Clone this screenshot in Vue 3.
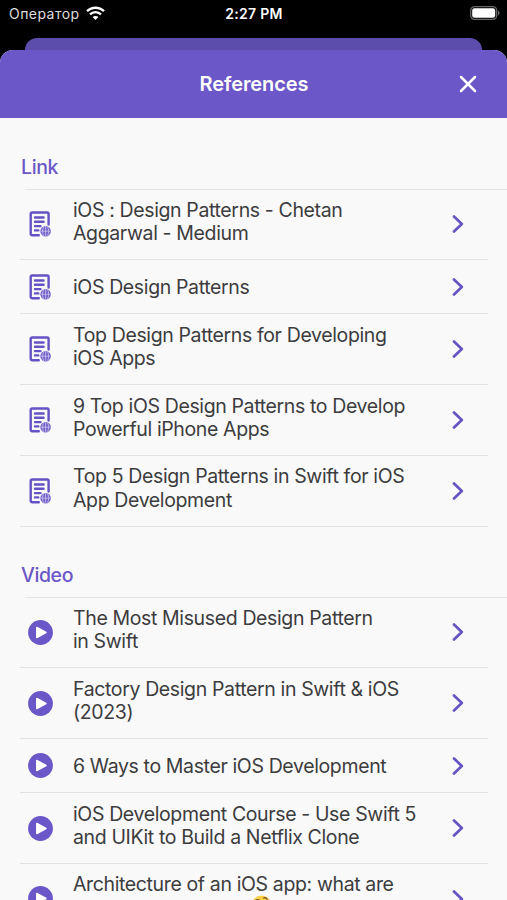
<script setup>
const sections = [
  {
    title: 'Link',
    kind: 'link',
    items: [
      ['iOS : Design Patterns - Chetan', 'Aggarwal - Medium'],
      ['iOS Design Patterns'],
      ['Top Design Patterns for Developing', 'iOS Apps'],
      ['9 Top iOS Design Patterns to Develop', 'Powerful iPhone Apps'],
      ['Top 5 Design Patterns in Swift for iOS', 'App Development'],
    ],
  },
  {
    title: 'Video',
    kind: 'video',
    items: [
      ['The Most Misused Design Pattern', 'in Swift'],
      ['Factory Design Pattern in Swift & iOS', '(2023)'],
      ['6 Ways to Master iOS Development'],
      ['iOS Development Course - Use Swift 5', 'and UIKit to Build a Netflix Clone'],
      ['Architecture of an iOS app: what are', 'design patterns for?'],
    ],
  },
]
</script>

<template>
  <div class="screen">
    <div class="status">
      <div class="carrier">
        <span>Оператор</span>
        <svg class="wifi" width="19" height="15" viewBox="0 0 19 15">
          <path d="M1 5.200C5.800.5 13.200.5 18 5.200" />
          <path d="M4 8.300c3.100-2.900 7.900-2.900 11 0" />
          <path class="dot" d="M9.500 14l-2.900-3c1.600-1.500 4.200-1.500 5.800 0z" />
        </svg>
      </div>
      <div class="time">2:27 PM</div>
      <svg class="battery" width="30" height="14" viewBox="0 0 30 14">
        <rect class="shell" x=".7" y=".7" width="26" height="12.600" rx="3.700" />
        <rect class="charge" x="2.200" y="2.200" width="23" height="9.600" rx="2.200" />
        <path class="tip" d="M28 4.600c2 .8 2 4 0 4.800z" />
      </svg>
    </div>
    <div class="behind"></div>
    <div class="sheet">
      <header class="head">
        <h1>References</h1>
        <svg class="close" width="18" height="18" viewBox="0 0 18 18">
          <path d="M2 2l14 14M16 2L2 16" />
        </svg>
      </header>
      <section v-for="s in sections" :key="s.title" class="section">
        <h2>{{ s.title }}</h2>
        <div class="rule"></div>
        <div v-for="(lines, i) in s.items" :key="i" class="row" :class="{ single: lines.length === 1 }">
          <div class="icon">
            <svg v-if="s.kind === 'link'" width="22" height="26" viewBox="0 0 22 26">
              <path class="page" d="M9.800 24.300H3.200a1.500 1.500 0 0 1-1.500-1.500V2.900c0-.8.6-1.400 1.500-1.400h15c.8 0 1.400.6 1.400 1.400v10.600" />
              <path class="page" d="M6 6.500h8.600M6 10.800h8.600M6 15.100h5.500M6 19.400h3.300" />
              <circle class="globe" cx="16.600" cy="20.200" r="5.300" />
              <path class="grid" d="M11.600 20.200h10M16.600 15.200v10M14.600 15.600c-1.400 3-1.400 6.200 0 9.200M18.600 15.600c1.400 3 1.400 6.200 0 9.200" />
            </svg>
            <svg v-else width="25" height="25" viewBox="0 0 25 25">
              <circle class="disc" cx="12.500" cy="12.500" r="12.400" />
              <path class="play" d="M8.800 7.500v10L18 12.500z" />
            </svg>
          </div>
          <div class="text">
            <div v-for="(l, n) in lines" :key="n">{{ l }}<svg v-if="l.endsWith('for?')" class="emoji" width="21" height="21" viewBox="0 0 21 21">
              <circle cx="10.500" cy="10.500" r="10" fill="#f8cf45" />
              <path d="M4.500 5.500q2-1.500 4-.5M12 3q3-1 4.500 1.500" fill="none" stroke="#7b551d" stroke-width="1.300" />
              <circle cx="7" cy="9" r="1.300" fill="#573b17" />
              <circle cx="13.500" cy="9" r="1.300" fill="#573b17" />
              <path d="M8 14.500q3-1.500 5.500-.5" fill="none" stroke="#7b551d" stroke-width="1.300" />
            </svg></div>
          </div>
          <svg class="chevron" width="12" height="18" viewBox="0 0 12 18">
            <path d="M2 1.500l7.800 7.500L2 16.500" />
          </svg>
        </div>
      </section>
    </div>
  </div>
</template>

<style>
body { background: #000; }
</style>

<style scoped>
.screen { width: 507px; height: 900px; overflow: hidden; background: #000; display: flex; flex-direction: column; font-family: Inter, "Noto Sans", sans-serif; }
.status { height: 38px; flex: none; display: grid; grid-template-columns: 1fr 80px 1fr; padding: 6px 7px 0 9px; box-sizing: border-box; color: #fff; font-size: 14px; line-height: 16px; }
.carrier { display: flex; gap: 6px; color: #ddd; letter-spacing: .45px; }
.wifi { fill: none; stroke: #fff; stroke-width: 2.400; }
.dot { fill: #fff; stroke: none; }
.time { text-align: center; font-weight: 600; letter-spacing: .3px; margin-left: -1px; white-space: nowrap; }
.battery { justify-self: end; }
.shell { fill: none; stroke: #666; stroke-width: 1.300; }
.charge { fill: #fff; }
.tip { fill: #666; }
.behind { height: 12px; flex: none; margin: 0 25px; border-radius: 12px 12px 0 0; background: #5c4dac; }
.sheet { flex: 1; min-height: 0; overflow: hidden; border-radius: 13px 13px 0 0; background: #f9f9f9; }
.head { height: 68px; background: #6b57c7; display: grid; grid-template-columns: 1fr auto 1fr; align-items: center; color: #fff; }
h1 { grid-column: 2; margin: 0 0 0 1px; font-size: 20px; line-height: 24px; font-weight: 600; letter-spacing: -.1px; }
.close { justify-self: end; margin-right: 30px; fill: none; stroke: #fff; stroke-width: 2.500; stroke-linecap: round; }
.section { height: 408px; padding-top: 36px; box-sizing: border-box; }
h2 { margin: 0 0 8.600px 21px; color: #6b57c7; font-size: 19.500px; line-height: 26px; font-weight: 500; letter-spacing: -.4px; }
.rule { height: 1px; margin-left: 25px; background: #e5e5e6; }
.row { height: 70.800px; margin: 0 19px 0 20px; box-sizing: border-box; border-bottom: 1px solid #e2e2e3; display: flex; align-items: center; }
.row.single { height: 54px; }
.icon { width: 40px; display: flex; justify-content: center; flex: none; }
.icon svg { display: block; }
.page { fill: none; stroke: #6652c4; stroke-width: 2.400; stroke-linecap: round; }
.globe { fill: #7664cb; }
.grid { fill: none; stroke: #d4cef0; stroke-width: .7; }
.disc { fill: #6b57c7; }
.play { fill: #fff; stroke: #fff; stroke-width: 1.500; stroke-linejoin: round; }
.text { flex: 1; margin-left: 13px; padding-bottom: 4.400px; color: #3c3c3e; font-size: 19.500px; line-height: 23.300px; letter-spacing: -.37px; white-space: nowrap; }
.single .text { padding: 2px 0 0; }
.emoji { vertical-align: top; margin: -2px 0 0 1px; }
.chevron { flex: none; margin-right: 24px; fill: none; stroke: #6754c2; stroke-width: 2.700; stroke-linecap: round; stroke-linejoin: round; }
</style>
